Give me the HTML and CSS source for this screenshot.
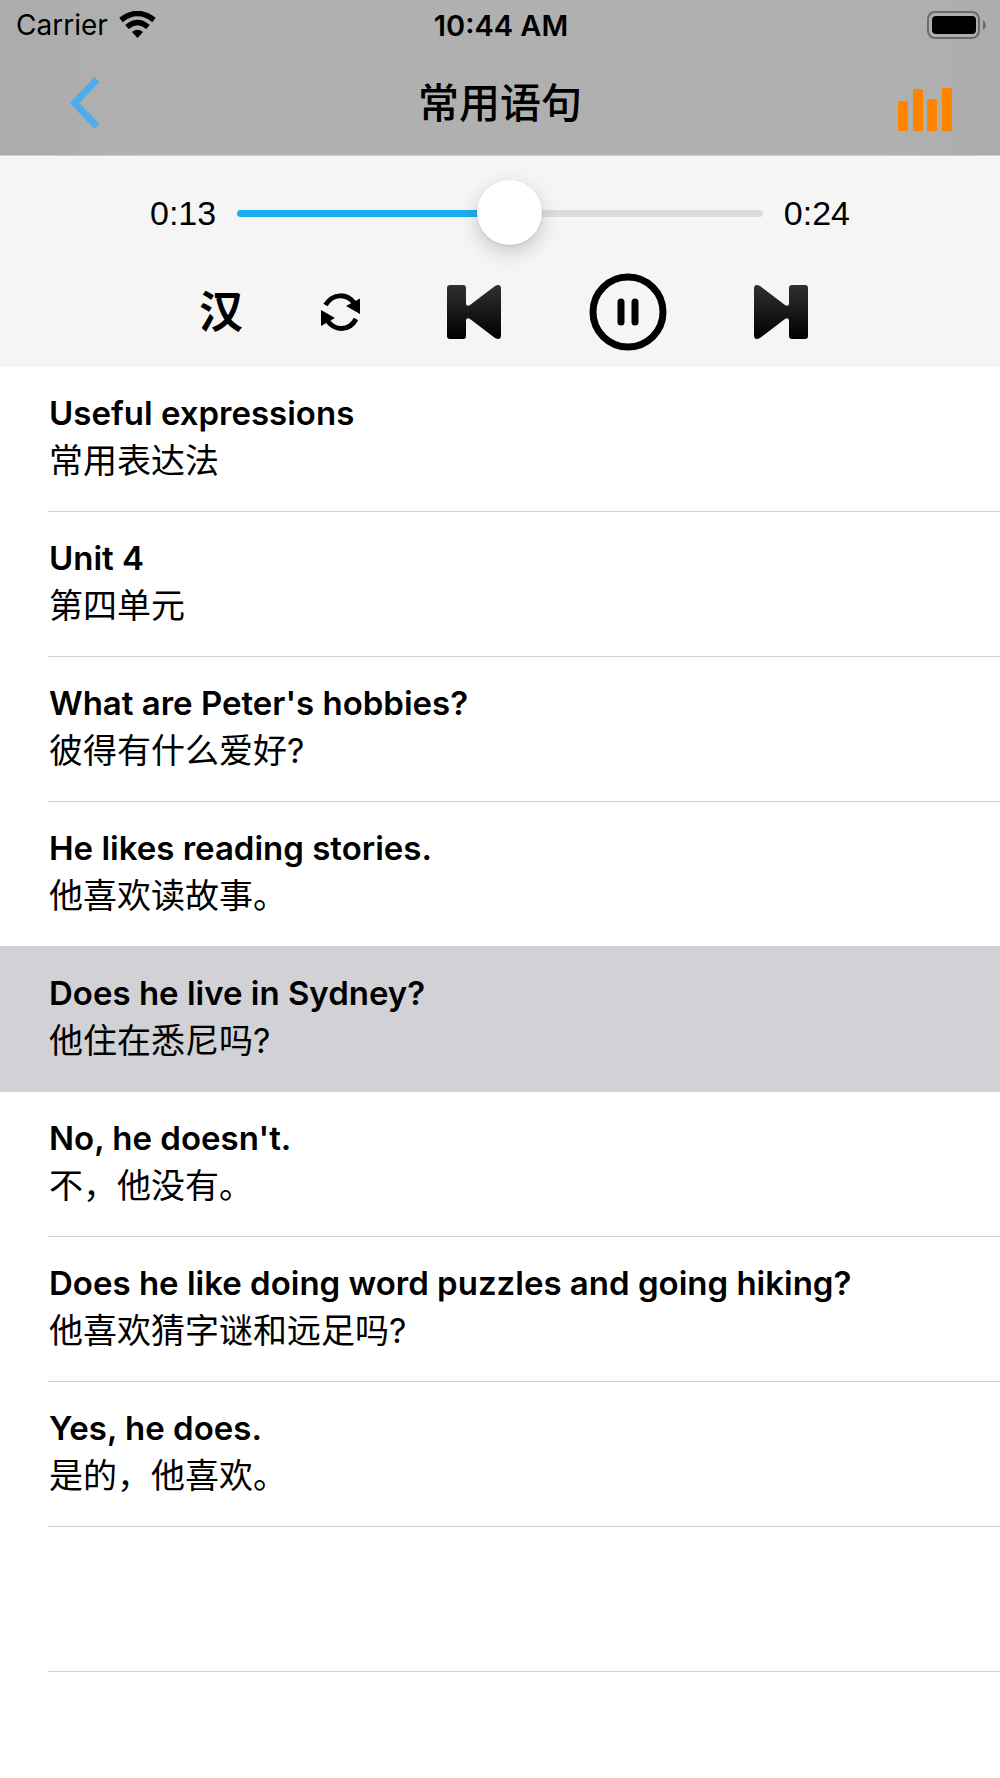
FILE: index.html
```html
<!DOCTYPE html>
<html lang="zh-CN">
<head>
    <meta charset="UTF-8">
    <meta name="viewport" content="width=device-width, initial-scale=1.0">
    <title>常用语句</title>
    <link rel="stylesheet" href="styles.css">
</head>
<body>
    <header class="header">
        <div class="status-bar">
            <div class="carrier">
                <span>Carrier</span>
                <svg width="37" height="28" viewBox="0 0 37 28" aria-hidden="true">
                    <path d="M2 9Q18.500 -4 35 9" fill="none" stroke="#000" stroke-width="5.500"/>
                    <path d="M8 16Q18.500 7 29 16" fill="none" stroke="#000" stroke-width="5.500"/>
                    <path d="M13 21Q18.500 16.500 24 21L18.500 27Z"/>
                </svg>
            </div>
            <div class="clock">10:44 AM</div>
            <svg class="battery" width="59" height="28" viewBox="0 0 59 28" aria-hidden="true">
                <rect x="1" y="1" width="51" height="26" rx="7" fill="none" stroke="#6b6b6b" stroke-width="2"/>
                <rect x="5" y="5" width="44" height="18" rx="4"/>
                <path d="M56 9Q59 11 59 14T56 19Z" fill="#6b6b6b"/>
            </svg>
        </div>
        <nav class="nav-bar">
            <button class="icon-button back" aria-label="返回">
                <svg width="30" height="52" viewBox="0 0 30 52">
                    <path d="M27 2.500L4.500 26L27 49.500" fill="none" stroke="#4facea" stroke-width="7"/>
                </svg>
            </button>
            <h1>常用语句</h1>
            <button class="icon-button levels" aria-label="播放列表">
                <svg width="54" height="43" viewBox="0 0 54 43" fill="#ff8500">
                    <rect x="0" y="13" width="10" height="30"/>
                    <rect x="15" y="1" width="10" height="42"/>
                    <rect x="29" y="11" width="10" height="32"/>
                    <rect x="44" y="0" width="10" height="43"/>
                </svg>
            </button>
        </nav>
    </header>

    <section class="player">
        <div class="progress">
            <label for="position">0:13</label>
            <input type="range" id="position" class="slider" min="0" max="24" step="0.1" value="12.5">
            <span>0:24</span>
        </div>
        <div class="controls">
            <button class="icon-button lang">汉</button>
            <button class="icon-button" aria-label="循环">
                <svg width="39" height="38" viewBox="0 0 39 38">
                    <path d="M4.500 12C12 0 26 0 34 11" fill="none" stroke="#000" stroke-width="5"/>
                    <path d="M25 13L39 5.500V21Z"/>
                    <path d="M35 26C28 39 13 38 6 27" fill="none" stroke="#000" stroke-width="5"/>
                    <path d="M14 25L0 17V33Z"/>
                </svg>
            </button>
            <button class="icon-button" aria-label="上一句">
                <svg width="54" height="54" viewBox="0 0 54 54">
                    <defs>
                        <linearGradient id="shade" x1="0" y1="0" x2="0" y2="54" gradientUnits="userSpaceOnUse">
                            <stop offset="0" stop-color="#303030"/>
                            <stop offset="1" stop-color="#000"/>
                        </linearGradient>
                    </defs>
                    <path d="M3 0H16Q19 0 19 3V19Q20 22 23 20L48 1Q54 -2 54 4V50Q54 56 48 53L23 34Q20 32 19 35V51Q19 54 16 54H3Q0 54 0 51V3Q0 0 3 0Z" fill="url(#shade)"/>
                </svg>
            </button>
            <button class="icon-button" aria-label="暂停">
                <svg width="78" height="78" viewBox="0 0 78 78" fill="none" stroke="#000">
                    <circle cx="39" cy="39" r="35" stroke-width="7"/>
                    <path d="M32 29V49M46 29V49" stroke-width="7" stroke-linecap="round"/>
                </svg>
            </button>
            <button class="icon-button" aria-label="下一句">
                <svg width="54" height="54" viewBox="0 0 54 54">
                    <path d="M51 0H38Q35 0 35 3V19Q34 22 31 20L6 1Q0 -2 0 4V50Q0 56 6 53L31 34Q34 32 35 35V51Q35 54 38 54H51Q54 54 54 51V3Q54 0 51 0Z" fill="url(#shade)"/>
                </svg>
            </button>
        </div>
    </section>

    <ul class="sentences">
        <li>
            <p class="english">Useful expressions</p>
            <p class="chinese">常用表达法</p>
        </li>
        <li>
            <p class="english">Unit 4</p>
            <p class="chinese">第四单元</p>
        </li>
        <li>
            <p class="english">What are Peter's hobbies?</p>
            <p class="chinese">彼得有什么爱好?</p>
        </li>
        <li>
            <p class="english">He likes reading stories.</p>
            <p class="chinese">他喜欢读故事。</p>
        </li>
        <li class="active">
            <p class="english">Does he live in Sydney?</p>
            <p class="chinese">他住在悉尼吗?</p>
        </li>
        <li>
            <p class="english">No, he doesn't.</p>
            <p class="chinese">不，他没有。</p>
        </li>
        <li>
            <p class="english">Does he like doing word puzzles and going hiking?</p>
            <p class="chinese">他喜欢猜字谜和远足吗?</p>
        </li>
        <li>
            <p class="english">Yes, he does.</p>
            <p class="chinese">是的，他喜欢。</p>
        </li>
        <li></li>
    </ul>
</body>
</html>
```
FILE: styles.css
```css
* {
    box-sizing: border-box;
}
body {
    margin: 0;
    background-color: white;
    color: black;
    font-family: Inter, "Noto Sans CJK SC", sans-serif;
}
h1, p, ul {
    margin: 0;
    padding: 0;
}
svg {
    display: block;
}
.icon-button {
    display: block;
    padding: 0;
    border: none;
    background: none;
    color: black;
    cursor: pointer;
}

/* header */
.header {
    background: linear-gradient(to right, #acacac, #b0b0b0 14%, #b0b0b0 88%, #adadad);
    border-bottom: 1px solid #d0d0d0;
}
.status-bar, .nav-bar {
    display: grid;
    grid-template-columns: 1fr auto 1fr;
    align-items: center;
}
.status-bar {
    height: 50px;
    padding: 0 14px 0 16px;
    font-size: 28px;
}
.carrier {
    display: flex;
    align-items: center;
    gap: 11px;
}
.clock {
    font-size: 29px;
    font-weight: 600;
}
.battery, .levels {
    justify-self: end;
}
.nav-bar {
    height: 105px;
    padding: 0 48px;
}
.back {
    justify-self: start;
    margin-left: 22px;
}
.nav-bar h1 {
    font-size: 41px;
    font-weight: 500;
    line-height: 60px;
}
.levels {
    margin-top: 14px;
}

/* player */
.player {
    padding: 24px 0 16px;
    background-color: #f5f5f5;
}
.progress {
    display: flex;
    align-items: center;
    gap: 21px;
    padding: 0 150px;
    font-family: "Liberation Sans", Arial, sans-serif;
    font-size: 34px;
}
.slider {
    flex: 1;
    min-width: 0;
    height: 66px;
    margin: 0;
    appearance: none;
    background: none;
}
.slider::-webkit-slider-runnable-track {
    height: 7px;
    border-radius: 4px;
    background: linear-gradient(to right, #1eadec 52%, #dcdcde 52%);
}
.slider::-webkit-slider-thumb {
    appearance: none;
    width: 65px;
    height: 65px;
    margin-top: -30px;
    border-radius: 50%;
    background-color: white;
    box-shadow: 0 7px 20px rgba(0, 0, 0, 0.18), 0 1px 3px rgba(0, 0, 0, 0.1);
}
.controls {
    display: grid;
    grid-template-columns: 120fr 119fr 148fr 160fr 146fr;
    align-items: center;
    justify-items: center;
    margin-top: 27px;
    padding: 0 146px 0 161px;
}
.lang {
    padding-bottom: 6px;
    font-family: "Noto Sans CJK SC", sans-serif;
    font-size: 44px;
    font-weight: 700;
    line-height: 60px;
}

/* sentences */
.sentences {
    list-style: none;
}
.sentences li {
    height: 145px;
    padding: 23px 0 0 49px;
    background: linear-gradient(#d0d0d2, #d0d0d2) 48px 100% / 100% 1px no-repeat;
}
.sentences .active {
    background: #d1d1d6;
    box-shadow: 0 -1px #d1d1d6;
}
.english {
    font-size: 33px;
    font-weight: 600;
    line-height: 46px;
}
.chinese {
    font-size: 34px;
    font-weight: 400;
    line-height: 50px;
}
```
